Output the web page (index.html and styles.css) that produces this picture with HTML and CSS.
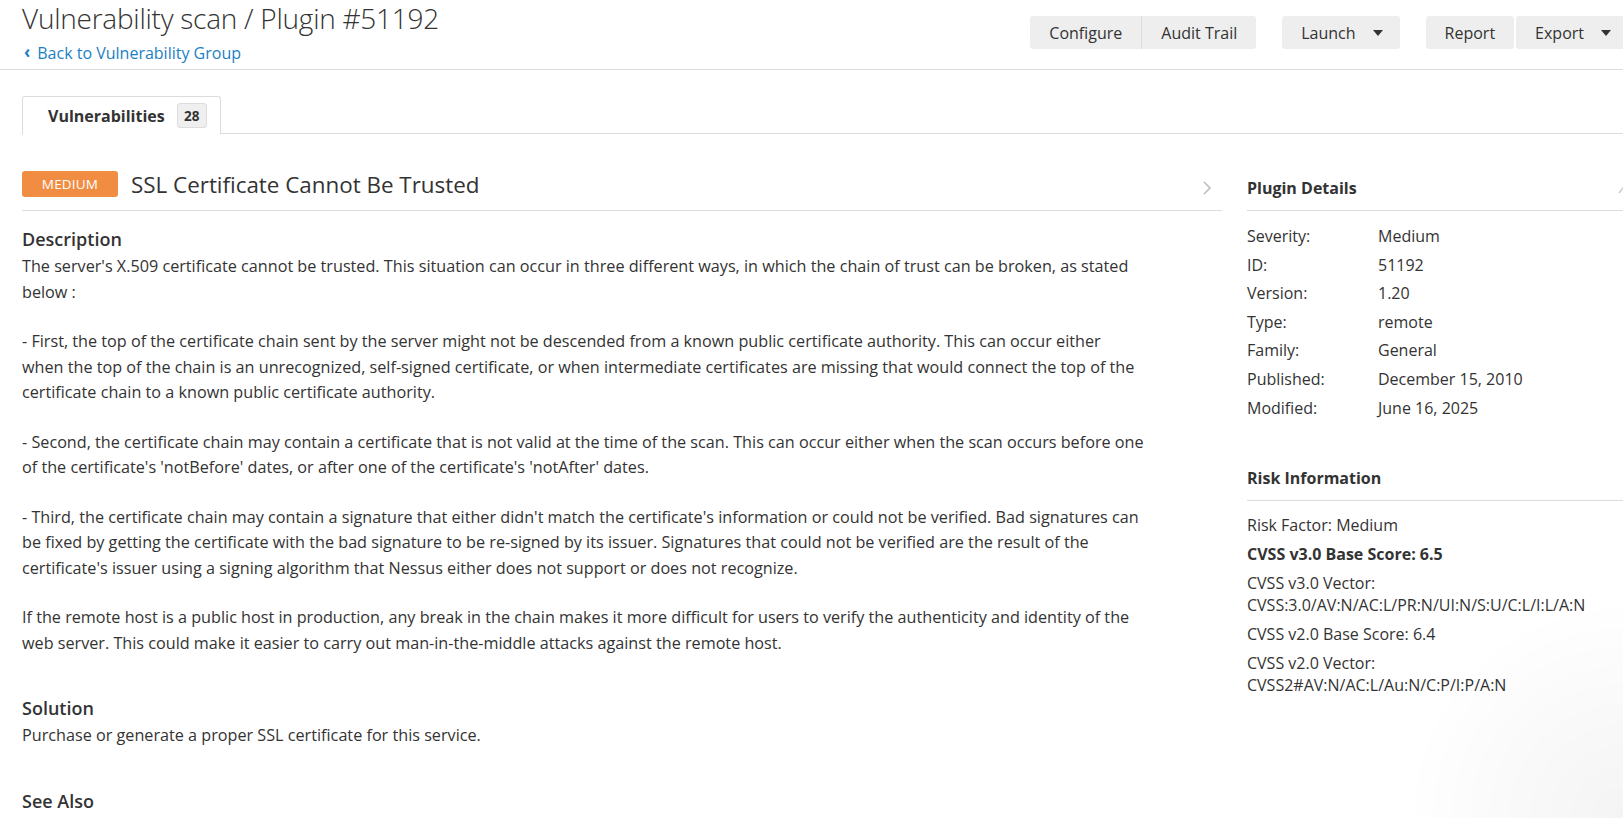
FILE: index.html
```html
<!DOCTYPE html>
<html lang="en">
<head>
<meta charset="utf-8">
<title>Vulnerability scan / Plugin #51192</title>
<link rel="stylesheet" href="styles.css">
</head>
<body>
<div class="page">
  <header class="topbar">
    <div class="title-block">
      <h1 class="page-title">Vulnerability scan / Plugin #51192</h1>
      <a class="back-link" href="#"><span class="back-chev">&#8249;</span>Back to Vulnerability Group</a>
    </div>
    <div class="actions">
      <div class="btn-group">
        <button class="btn btn-configure">Configure</button>
        <button class="btn btn-audit">Audit Trail</button>
      </div>
      <div class="btn-group">
        <button class="btn btn-launch">Launch<span class="caret"></span></button>
      </div>
      <div class="btn-group btn-group-split">
        <button class="btn btn-report">Report</button>
        <button class="btn btn-export">Export<span class="caret"></span></button>
      </div>
    </div>
  </header>

  <nav class="tabs">
    <div class="tab tab-active">Vulnerabilities <span class="count">28</span></div>
    <div class="tab-fill"></div>
  </nav>

  <main class="content">
    <section class="main-col">
      <div class="vuln-header">
        <span class="sev-badge">MEDIUM</span>
        <h2 class="vuln-title">SSL Certificate Cannot Be Trusted</h2>
        <svg class="next-chev" width="10" height="16" viewBox="0 0 10 16"><path d="M2 2 L8 8 L2 14" fill="none" stroke="#bdbdbd" stroke-width="1.6"/></svg>
      </div>

      <div class="section">
        <h3 class="section-title">Description</h3>
        <div class="section-body">
          <p>The server's X.509 certificate cannot be trusted. This situation can occur in three different ways, in which the chain of trust can be broken, as stated below :</p>
          <p>- First, the top of the certificate chain sent by the server might not be descended from a known public certificate authority. This can occur either when the top of the chain is an unrecognized, self-signed certificate, or when intermediate certificates are missing that would connect the top of the certificate chain to a known public certificate authority.</p>
          <p>- Second, the certificate chain may contain a certificate that is not valid at the time of the scan. This can occur either when the scan occurs before one of the certificate's 'notBefore' dates, or after one of the certificate's 'notAfter' dates.</p>
          <p>- Third, the certificate chain may contain a signature that either didn't match the certificate's information or could not be verified. Bad signatures can be fixed by getting the certificate with the bad signature to be re-signed by its issuer. Signatures that could not be verified are the result of the certificate's issuer using a signing algorithm that Nessus either does not support or does not recognize.</p>
          <p>If the remote host is a public host in production, any break in the chain makes it more difficult for users to verify the authenticity and identity of the web server. This could make it easier to carry out man-in-the-middle attacks against the remote host.</p>
        </div>
      </div>

      <div class="section">
        <h3 class="section-title">Solution</h3>
        <div class="section-body">
          <p>Purchase or generate a proper SSL certificate for this service.</p>
        </div>
      </div>

      <div class="section">
        <h3 class="section-title">See Also</h3>
      </div>
    </section>

    <aside class="side-col">
      <div class="side-header">
        <h3 class="side-title">Plugin Details</h3>
        <svg class="collapse-icon" width="10" height="8" viewBox="0 0 10 8"><path d="M1 7 L5 2 L9 7" fill="none" stroke="#c8c8c8" stroke-width="1.4"/></svg>
      </div>
      <dl class="details">
        <div class="drow"><dt>Severity:</dt><dd>Medium</dd></div>
        <div class="drow"><dt>ID:</dt><dd>51192</dd></div>
        <div class="drow"><dt>Version:</dt><dd>1.20</dd></div>
        <div class="drow"><dt>Type:</dt><dd>remote</dd></div>
        <div class="drow"><dt>Family:</dt><dd>General</dd></div>
        <div class="drow"><dt>Published:</dt><dd>December 15, 2010</dd></div>
        <div class="drow"><dt>Modified:</dt><dd>June 16, 2025</dd></div>
      </dl>

      <div class="side-header side-header-risk">
        <h3 class="side-title">Risk Information</h3>
      </div>
      <ul class="risk">
        <li>Risk Factor: Medium</li>
        <li class="strong">CVSS v3.0 Base Score: 6.5</li>
        <li>CVSS v3.0 Vector:<br>CVSS:3.0/AV:N/AC:L/PR:N/UI:N/S:U/C:L/I:L/A:N</li>
        <li>CVSS v2.0 Base Score: 6.4</li>
        <li>CVSS v2.0 Vector:<br>CVSS2#AV:N/AC:L/Au:N/C:P/I:P/A:N</li>
      </ul>
    </aside>
  </main>
</div>
</body>
</html>
```

FILE: styles.css
```css
html, body {
  margin: 0;
  padding: 0;
  overflow: hidden;
  background: #fff;
}

body {
  font-family: "Open Sans", "Noto Sans", sans-serif;
  color: #333;
  font-size: 16px;
}

body::after {
  content: "";
  position: fixed;
  right: 0;
  bottom: 0;
  width: 220px;
  height: 220px;
  pointer-events: none;
  background: radial-gradient(circle at 100% 100%, rgba(0,0,0,0.045) 0%, rgba(0,0,0,0.02) 40%, rgba(0,0,0,0) 70%);
}

.page {
  width: 1680px;
}

/* ---------- top bar ---------- */
.topbar {
  display: flex;
  justify-content: space-between;
  align-items: flex-start;
  height: 69px;
  padding: 0 50px 0 22px;
  border-bottom: 1px solid #dcdcdc;
}

.page-title {
  margin: 0;
  font-weight: 300;
  font-size: 28px;
  line-height: 37px;
  color: #333;
  letter-spacing: -0.25px;
}

.back-link {
  display: inline-flex;
  align-items: center;
  margin-top: 5px;
  font-size: 16px;
  line-height: 22px;
  color: #1b7fc4;
  text-decoration: none;
}

.back-chev {
  font-weight: 700;
  font-size: 17px;
  margin: -2px 7px 0 2px;
}

.actions {
  display: flex;
  gap: 26px;
  margin-top: 16px;
}

.btn-group {
  display: flex;
}

.btn-group-split {
  gap: 2px;
}

.btn {
  font-family: inherit;
  font-size: 16px;
  color: #333;
  background: #eeeeee;
  border: 0;
  height: 33px;
  padding: 0 19px;
  border-radius: 3px;
  display: flex;
  align-items: center;
  cursor: pointer;
}

.btn-configure {
  border-radius: 3px 0 0 3px;
  border-right: 1px solid #dadada;
}

.btn-audit {
  border-radius: 0 3px 3px 0;
}

.btn-launch {
  padding-right: 17px;
}

.caret {
  display: inline-block;
  width: 0;
  height: 0;
  margin-left: 17px;
  border-left: 5px solid transparent;
  border-right: 5px solid transparent;
  border-top: 6px solid #333;
}

/* ---------- tabs ---------- */
.tabs {
  display: flex;
  align-items: flex-end;
  margin-top: 25px;
  padding-left: 22px;
  height: 39px;
}

.tab {
  height: 39px;
  box-sizing: border-box;
  padding: 0 13px 0 25px;
  border: 1px solid #dcdcdc;
  border-bottom: 1px solid #fff;
  border-radius: 3px 3px 0 0;
  display: flex;
  align-items: center;
  font-weight: 700;
  font-size: 16px;
  color: #333;
  position: relative;
  top: 1px;
}

.count {
  display: inline-flex;
  align-items: center;
  justify-content: center;
  margin-left: 12px;
  width: 30px;
  height: 25px;
  box-sizing: border-box;
  background: #efefef;
  border: 1px solid #dcdcdc;
  border-radius: 3px;
  font-size: 13.5px;
  font-weight: 700;
}

.tab-fill {
  flex: 1;
  border-bottom: 1px solid #dcdcdc;
}

/* ---------- content ---------- */
.content {
  display: flex;
  gap: 25px;
  padding: 30px 0 0 22px;
}

.main-col {
  width: 1200px;
  flex: none;
}

.vuln-header {
  display: flex;
  align-items: center;
  height: 47px;
  box-sizing: border-box;
  padding-bottom: 6px;
  border-bottom: 1px solid #dcdcdc;
}

.sev-badge {
  display: inline-flex;
  align-items: center;
  justify-content: center;
  width: 96px;
  height: 26px;
  background: #f18c43;
  color: #fff;
  border-radius: 3px;
  font-size: 13.5px;
  letter-spacing: 0.2px;
}

.vuln-title {
  margin: 0 0 0 13px;
  font-weight: 400;
  font-size: 22.4px;
  color: #333;
  flex: 1;
}

.next-chev {
  margin-right: 10px;
  margin-top: 8px;
}

.section {
  margin-top: 16px;
}

.section + .section {
  margin-top: 40px;
}

.section-title {
  margin: 0 0 3px;
  font-size: 18px;
  font-weight: 600;
  line-height: 24px;
  color: #333;
}

.section-body {
  padding-right: 77px;
  font-size: 16.2px;
  line-height: 25.5px;
}

.section-body p {
  margin: 0 0 24px;
}

.section-body p:last-child {
  margin-bottom: 0;
}

/* ---------- side column ---------- */
.side-col {
  flex: 1;
}

.side-header {
  display: flex;
  justify-content: space-between;
  align-items: center;
  height: 47px;
  box-sizing: border-box;
  padding-top: 2px;
  border-bottom: 1px solid #dcdcdc;
}

.side-header-risk {
  margin-top: 32px;
}

.side-title {
  margin: 0;
  font-size: 16px;
  font-weight: 700;
  line-height: 20px;
}

.collapse-icon {
  margin-right: 52px;
  margin-top: 4px;
}

.details {
  margin: 11px 0 0;
  font-size: 16px;
}

.drow {
  display: flex;
  line-height: 28.6px;
}

.drow dt {
  width: 131px;
  flex: none;
}

.drow dd {
  margin: 0;
}

.risk {
  list-style: none;
  margin: 13px 0 0;
  padding: 0;
  font-size: 16px;
  line-height: 22px;
}

.risk li {
  margin-bottom: 7px;
}

.risk .strong {
  font-weight: 700;
}
```
